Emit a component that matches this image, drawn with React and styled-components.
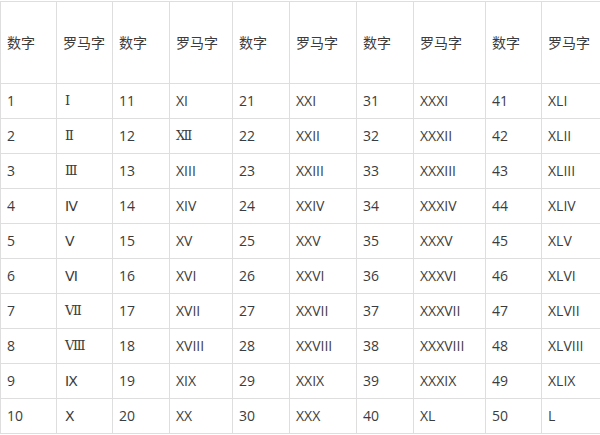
import React from "react";
import styled, { createGlobalStyle } from "styled-components";

const GlobalStyle = createGlobalStyle`
  html, body {
    margin: 0;
    padding: 0;
    background: #fff;
  }
  body {
    font-family: "Open Sans", "Noto Sans CJK SC", sans-serif;
  }
`;

// column widths measured from the screenshot
const widths = [56, 56, 57, 63, 57, 67, 57, 72, 56, 59];

const firstRoman = ["Ⅰ", "Ⅱ", "Ⅲ", "Ⅳ", "Ⅴ", "Ⅵ", "Ⅶ", "Ⅷ", "Ⅸ", "Ⅹ"];
// glyphs drawn with bars in the screenshot
const barred = ["Ⅰ", "Ⅱ", "Ⅲ", "Ⅶ", "Ⅷ", "Ⅻ"];

const toRoman = (n) => {
  if (n <= 10) return firstRoman[n - 1];
  if (n === 12) return "Ⅻ";
  const map = [
    [50, "L"],
    [40, "XL"],
    [10, "X"],
    [9, "IX"],
    [5, "V"],
    [4, "IV"],
    [1, "I"],
  ];
  let out = "";
  let rest = n;
  map.forEach(([v, s]) => {
    while (rest >= v) {
      out += s;
      rest -= v;
    }
  });
  return out;
};

const glyphKind = (s) => {
  if (barred.includes(s)) return "serif";
  if (firstRoman.includes(s)) return "sans";
  return undefined;
};

const rows = Array.from({ length: 10 }, (_, i) =>
  Array.from({ length: 5 }, (_, g) => i + 1 + g * 10)
);

const App = () => {
  return (
    <>
      <GlobalStyle />
      <Table>
        <colgroup>
          {widths.map((w, i) => (
            <col key={i} style={{ width: w }} />
          ))}
        </colgroup>
        <thead>
          <HeadRow>
            {Array.from({ length: 5 }).map((_, g) => (
              <React.Fragment key={g}>
                <Cell as="th">数字</Cell>
                <Cell as="th">罗马字</Cell>
              </React.Fragment>
            ))}
          </HeadRow>
        </thead>
        <tbody>
          {rows.map((row, i) => (
            <BodyRow key={i}>
              {row.map((n) => {
                const r = toRoman(n);
                return (
                  <React.Fragment key={n}>
                    <Cell>{n}</Cell>
                    <Cell $glyph={glyphKind(r)} $indent={n <= 10}>
                      {r}
                    </Cell>
                  </React.Fragment>
                );
              })}
            </BodyRow>
          ))}
        </tbody>
      </Table>
    </>
  );
};

const Table = styled.table`
  width: 600px;
  margin: 1px 0 0 0;
  border-collapse: collapse;
  table-layout: fixed;
  color: #3c3c3c;
  font-size: 14px;
`;

const HeadRow = styled.tr`
  height: 82px;
`;

const BodyRow = styled.tr`
  height: 35px;
`;

const Cell = styled.td`
  padding: 0 0 0 6px;
  border: 1px solid #dedede;
  text-align: left;
  font-weight: normal;
  vertical-align: middle;
  white-space: nowrap;
  overflow: hidden;
  line-height: 20px;
  font-family: ${(p) =>
    p.$glyph === "serif"
      ? `"DejaVu Serif", serif`
      : p.$glyph === "sans"
      ? `"DejaVu Sans", sans-serif`
      : "inherit"};
  font-size: ${(p) => (p.$glyph === "serif" ? "13px" : "14px")};
  padding-left: ${(p) => (p.$indent ? "8px" : "6px")};
`;

export default App;
